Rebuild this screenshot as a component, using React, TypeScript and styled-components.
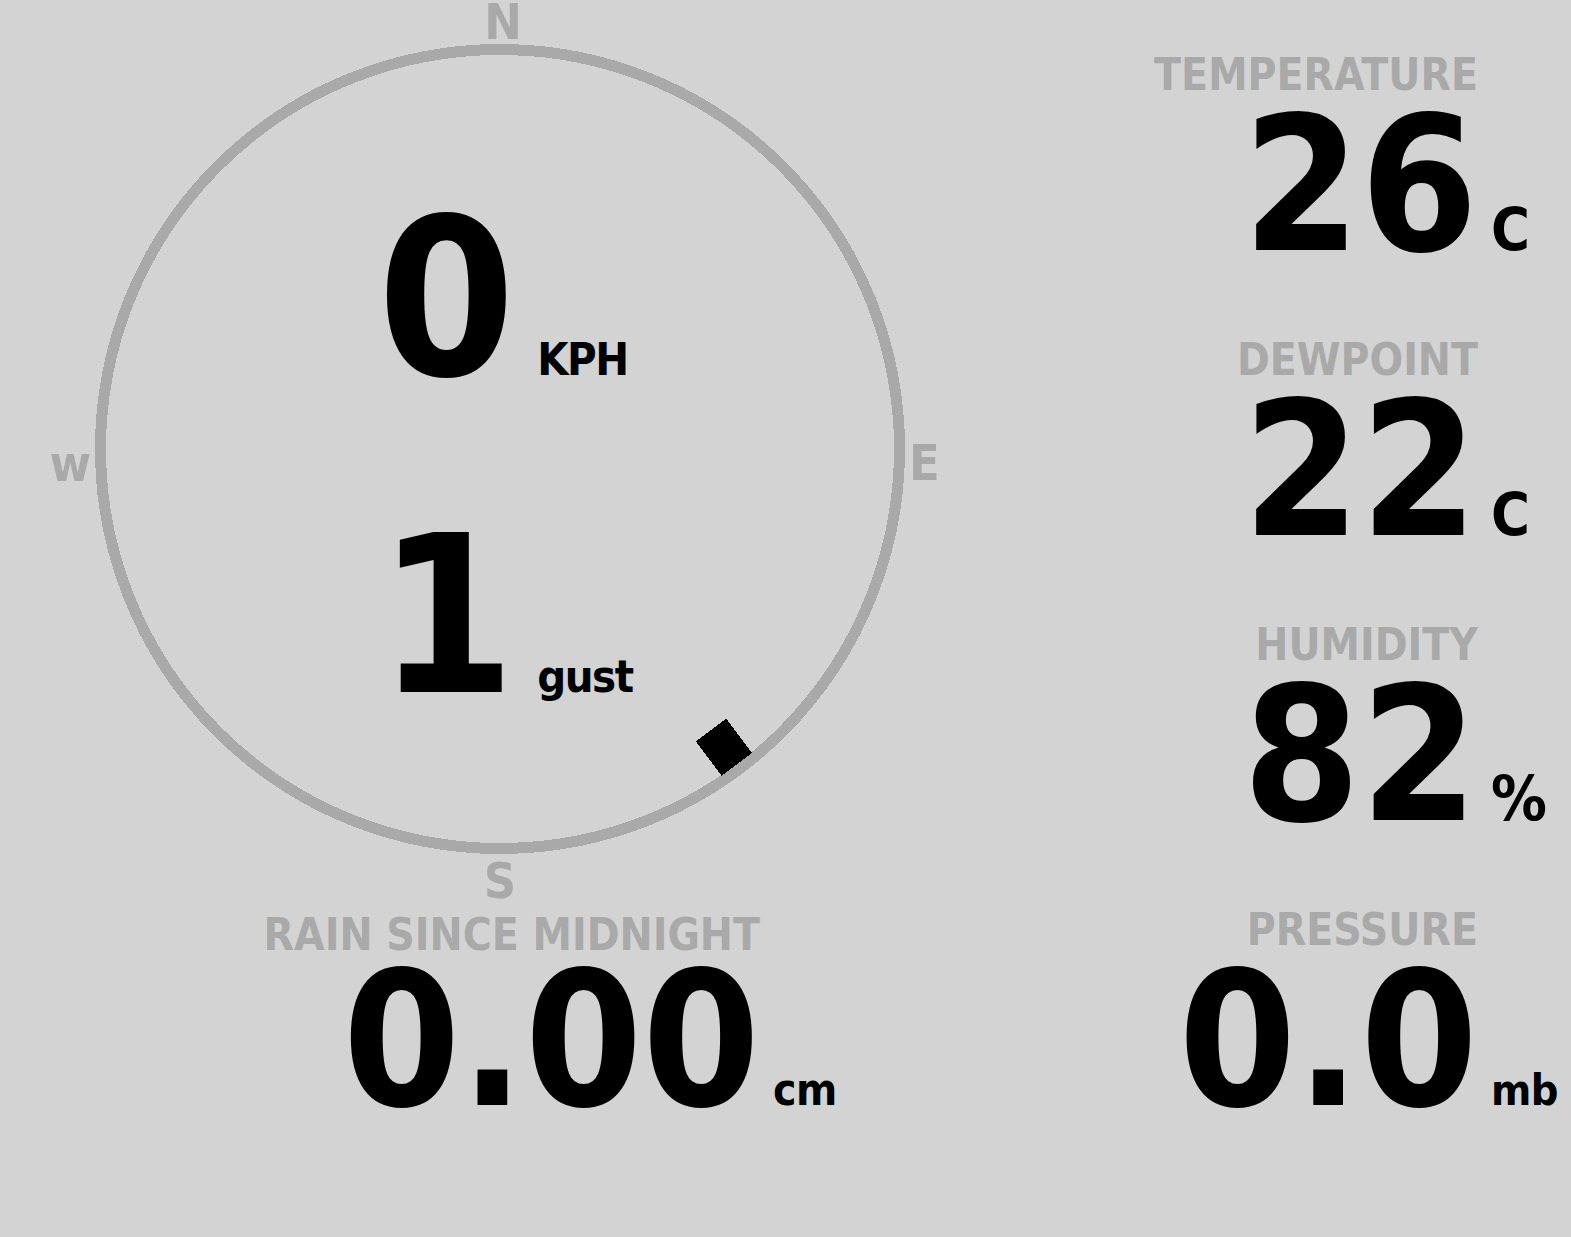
import React from "react";
import styled, { createGlobalStyle } from "styled-components";

const FONT = `"DejaVu Sans Condensed", "DejaVu Sans", "Liberation Sans", sans-serif`;
const MUTED = "#a9a9a9";

const GlobalStyle = createGlobalStyle`
  *, *::before, *::after { box-sizing: border-box; }
  html, body { margin: 0; padding: 0; background: #d3d3d3; overflow: hidden; }
  body { font-family: ${FONT}; font-stretch: condensed; font-weight: 700; color: #000; }
`;

const Page = styled.main`
  display: flex;
  width: 1571px;
  height: 1237px;
  font-family: ${FONT};
  font-stretch: condensed;
  font-weight: 700;
`;

const LeftColumn = styled.section`
  width: 1000px;
  padding-top: 43.5px;
  display: flex;
  flex-direction: column;
`;

const RightColumn = styled.section`
  flex: 1;
  padding-top: 58px;
  display: flex;
  flex-direction: column;
  gap: 65px;
`;

const Compass = styled.div`
  position: relative;
  width: 810px;
  height: 810px;
  margin-left: 95px;
  padding-top: 18px;
  display: flex;
  flex-direction: column;
  justify-content: center;
  align-items: center;
`;

const Ring = styled.svg`
  position: absolute;
  inset: 0;
  width: 810px;
  height: 810px;
  overflow: visible;
`;

const Cardinal = styled.span<{ $top: number; $left?: number; $right?: number; $center?: boolean; $shift?: number }>`
  position: absolute;
  top: ${(p) => p.$top}px;
  ${(p) => (p.$center ? `left: 50%; transform: translateX(calc(-50% + ${p.$shift ?? 0}px));` : "")}
  ${(p) => (p.$left !== undefined ? `left: ${p.$left}px;` : "")}
  ${(p) => (p.$right !== undefined ? `right: ${p.$right}px;` : "")}
  font-size: 50px;
  line-height: 36px;
  color: ${MUTED};
`;

const SpeedGrid = styled.div`
  position: relative;
  display: grid;
  grid-template-columns: auto auto;
  column-gap: 22px;
  row-gap: 97px;
  align-items: baseline;
  margin-left: 10px;
`;

const SpeedValue = styled.span`
  font-size: 220px;
  line-height: 220px;
  text-align: right;
`;

const Reading = styled.div<{ $numCol: string; $unitCol: number }>`
  display: grid;
  grid-template-columns: ${(p) => p.$numCol} ${(p) => p.$unitCol}px;
  column-gap: 13px;
  align-items: baseline;
`;

const Label = styled.div`
  grid-column: 1;
  font-size: 44px;
  line-height: 34px;
  color: ${MUTED};
  text-align: right;
  white-space: nowrap;
`;

const Value = styled.div<{ $lh: number }>`
  grid-column: 1;
  font-size: 188px;
  line-height: ${(p) => p.$lh}px;
  text-align: right;
  white-space: nowrap;
`;

const Unit = styled.span<{ $size: number; $track?: number }>`
  font-size: ${(p) => p.$size}px;
  line-height: 1;
  letter-spacing: ${(p) => p.$track ?? -0.5}px;
  white-space: nowrap;
`;

const RainBlock = styled(Reading)`
  margin-top: 64px;
`;

const CX = 405;
const R = 399.5;
const windBearing = 143.1;

function CompassRing() {
  return (
    <Ring viewBox="0 0 810 810" aria-hidden="true">
      <circle cx={CX} cy={CX} r={R} fill="none" stroke={MUTED} strokeWidth={11} shapeRendering="crispEdges" />
      <g transform={`rotate(${windBearing} ${CX} ${CX})`}>
        <rect x={CX - 19} y={CX - 394.5} width={38} height={43} fill="#000" shapeRendering="crispEdges" />
      </g>
    </Ring>
  );
}

type Item = { label: string; value: string; unit: string; unitSize: number };

const readings: Item[] = [
  { label: "TEMPERATURE", value: "26", unit: "C", unitSize: 59 },
  { label: "DEWPOINT", value: "22", unit: "C", unitSize: 59 },
  { label: "HUMIDITY", value: "82", unit: "%", unitSize: 62 },
  { label: "PRESSURE", value: "0.0", unit: "mb", unitSize: 43 },
];

export default function App() {
  return (
    <>
      <GlobalStyle />
      <Page>
        <LeftColumn>
          <Compass>
            <CompassRing />
            <Cardinal $top={-40} $center $shift={3}>N</Cardinal>
            <Cardinal $top={401} $left={814}>E</Cardinal>
            <Cardinal $top={819} $center>S</Cardinal>
            <Cardinal $top={402} $right={814}>w</Cardinal>
            <SpeedGrid>
              <SpeedValue>0</SpeedValue>
              <Unit $size={45} $track={-1.5}>KPH</Unit>
              <SpeedValue>1</SpeedValue>
              <Unit $size={45} $track={-1.5}>gust</Unit>
            </SpeedGrid>
          </Compass>
          <RainBlock $numCol="760px" $unitCol={84}>
            <Label>RAIN SINCE MIDNIGHT</Label>
            <Value $lh={176}>0.00</Value>
            <Unit $size={44}>cm</Unit>
          </RainBlock>
        </LeftColumn>
        <RightColumn>
          {readings.map((r) => (
            <Reading key={r.label} $numCol="1fr" $unitCol={80}>
              <Label>{r.label}</Label>
              <Value $lh={186}>{r.value}</Value>
              <Unit $size={r.unitSize}>{r.unit}</Unit>
            </Reading>
          ))}
        </RightColumn>
      </Page>
    </>
  );
}
